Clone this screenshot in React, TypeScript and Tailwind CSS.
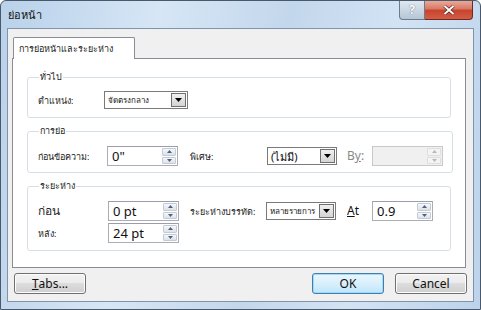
const ui = "font-['Segoe_UI','Noto_Sans','DejaVu_Sans',sans-serif]";

function SpinBox({ value, disabled = false, width = "w-[71px]" }: { value: string; disabled?: boolean; width?: string }) {
  return (
    <div
      className={[
        "flex h-[20px] shrink-0 items-stretch border",
        width,
        disabled ? "border-[#c9c9c9] bg-[#f0f0f0]" : "border-[#abadb3] border-t-[#9a9ea8] bg-white",
      ].join(" ")}
    >
      <div className="flex flex-1 items-center pl-[4px] text-[13px] leading-none text-[#111]">{value}</div>
      <div className="flex w-[15px] flex-col gap-px py-px pr-px">
        <SpinButton up disabled={disabled} />
        <SpinButton disabled={disabled} />
      </div>
    </div>
  );
}

function SpinButton({ up = false, disabled = false }: { up?: boolean; disabled?: boolean }) {
  return (
    <div
      className={[
        "flex flex-1 items-center justify-center rounded-[1px] border",
        disabled ? "border-[#dedede] bg-[#f4f4f4]" : "border-[#c3cbd5] bg-gradient-to-b from-[#f6f7f9] to-[#dde2e8]",
      ].join(" ")}
    >
      <svg width="5" height="3" viewBox="0 0 5 3">
        <path d={up ? "M0 3 L2.5 0 L5 3 Z" : "M0 0 L2.5 3 L5 0 Z"} fill={disabled ? "#b8b8b8" : "#4d6185"} />
      </svg>
    </div>
  );
}

function Combo({ value, width, small = true }: { value: string; width: string; small?: boolean }) {
  return (
    <div className={["flex h-[18px] shrink-0 items-stretch border border-[#7a7a7a] bg-white", width].join(" ")}>
      <div
        className={[
          "flex flex-1 items-center overflow-hidden whitespace-nowrap pl-[3px] leading-none text-[#111]",
          small ? "text-[8px]" : "text-[11px]",
        ].join(" ")}
      >
        {value}
      </div>
      <div className="m-px flex w-[15px] items-center justify-center border border-[#707070] bg-gradient-to-b from-[#f0f0f0] to-[#d4d4d4]">
        <svg width="7" height="4" viewBox="0 0 7 4">
          <path d="M0 0 L7 0 L3.5 4 Z" fill="#000" />
        </svg>
      </div>
    </div>
  );
}

function Group({ label, className, children }: { label: string; className: string; children: React.ReactNode }) {
  return (
    <fieldset className={["mx-[14px] rounded-[3px] border border-[#d5dfe5] px-[9px]", className].join(" ")}>
      <legend className="ml-[2px] px-[1px] text-[9px] leading-[12px] text-[#222]">{label}</legend>
      {children}
    </fieldset>
  );
}

function Label({ children, width, className = "" }: { children: React.ReactNode; width: string; className?: string }) {
  return (
    <div className={["shrink-0 whitespace-nowrap text-[9px] leading-none text-[#222]", width, className].join(" ")}>
      {children}
    </div>
  );
}

function Button({ children, focused = false, className = "" }: { children: React.ReactNode; focused?: boolean; className?: string }) {
  return (
    <button
      type="button"
      className={[
        "flex h-[21px] w-[72px] items-center justify-center rounded-[3px] border text-[12px] leading-none text-[#111]",
        focused
          ? "border-[#3c7fb1] bg-gradient-to-b from-[#eaf6fd] via-[#d9f0fc] to-[#bee6fd] shadow-[inset_0_0_0_1px_#a6d8f4]"
          : "border-[#707070] bg-[linear-gradient(#f2f2f2_0%,#ebebeb_49%,#dddddd_50%,#cfcfcf_100%)] shadow-[inset_0_0_0_1px_#fcfcfc]",
        className,
      ].join(" ")}
    >
      {children}
    </button>
  );
}

export default function App() {
  return (
    <div className={["relative h-[310px] w-[481px] overflow-hidden bg-white", ui].join(" ")}>
      <div className="flex h-[310px] w-[481px] flex-col rounded-t-[6px] border border-[#49596b] bg-[linear-gradient(100deg,#b9d1ea_0%,#d6e6f5_30%,#c3d7ec_55%,#d2e3f4_75%,#bcd3eb_100%)]">
        {/* title bar */}
        <div className="flex h-[27px] items-start justify-between pl-[7px] pr-[7px]">
          <div className="pt-[7px] text-[11px] leading-[14px] text-[#111]">ย่อหน้า</div>
          <div className="flex">
            <div className="flex h-[19px] w-[26px] items-center justify-center rounded-bl-[4px] border border-t-0 border-[#6b7b8d] bg-gradient-to-b from-[#dfe8f1] to-[#b6c6d6] text-[12px] font-bold leading-none text-white [text-shadow:0_0_1px_#34465a]">
              ?
            </div>
            <div className="flex h-[19px] w-[48px] items-center justify-center rounded-br-[4px] border border-l-0 border-t-0 border-[#6e2a22] bg-[linear-gradient(#e9a99a_0%,#d97763_45%,#c7432d_50%,#d45c42_100%)]">
              <svg width="12" height="10" viewBox="0 0 12 10">
                <path d="M1.5 1 L10.5 9 M10.5 1 L1.5 9" stroke="#4a1a14" strokeWidth="3.2" />
                <path d="M1.5 1 L10.5 9 M10.5 1 L1.5 9" stroke="#fff" strokeWidth="2" />
              </svg>
            </div>
          </div>
        </div>

        {/* client area */}
        <div className="mx-[6px] flex h-[274px] flex-col border border-[#8193a8] bg-[#f0f0f0]">
          <div className="flex flex-col px-[4px] pt-[8px]">
            <div className="relative z-10 ml-px flex h-[22px] w-[122px] items-center rounded-t-[2px] border border-b-0 border-[#898c95] bg-white pl-[5px] text-[9px] leading-none text-[#222]">
              การย่อหน้าและระยะห่าง
            </div>
            <div className="-mt-px flex h-[210px] w-[454px] flex-col border border-[#898c95] bg-white pt-[12px]">
              <Group label="ทั่วไป" className="h-[47px]">
                <div className="flex items-center pt-[8px]">
                  <Label width="w-[67px]" className="pl-px">ตำแหน่ง:</Label>
                  <Combo value="จัดตรงกลาง" width="w-[84px]" />
                </div>
              </Group>

              <Group label="การย่อ" className="mt-[7px] h-[48px]">
                <div className="flex items-center pt-[9px]">
                  <Label width="w-[70px]" className="pl-px">ก่อนข้อความ:</Label>
                  <SpinBox value={'0"'} />
                  <Label width="w-[89px]" className="pl-[12px]">พิเศษ:</Label>
                  <Combo value="(ไม่มี)" width="w-[70px]" small={false} />
                  <div className="w-[25px] shrink-0 pl-[10px] text-[12px] leading-none text-[#888]">
                    B<span className="underline">y</span>:
                  </div>
                  <div className="ml-[10px]">
                    <SpinBox value="" disabled />
                  </div>
                </div>
              </Group>

              <Group label="ระยะห่าง" className="mt-[7px] h-[71px]">
                <div className="flex flex-col gap-[2px] pt-[9px]">
                  <div className="flex items-center">
                    <Label width="w-[71px]" className="pl-px text-[12px]">ก่อน</Label>
                    <SpinBox value="0 pt" />
                    <Label width="w-[87px]" className="pl-[11px] text-[8px]">ระยะห่างบรรทัด:</Label>
                    <Combo value="หลายรายการ" width="w-[70px]" />
                    <div className="w-[24px] shrink-0 pl-[11px] text-[12px] leading-none text-[#111]">
                      <span className="underline">A</span>t
                    </div>
                    <div className="ml-[12px]">
                      <SpinBox value="0.9" width="w-[61px]" />
                    </div>
                  </div>
                  <div className="flex items-center">
                    <Label width="w-[71px]" className="pl-px">หลัง:</Label>
                    <SpinBox value="24 pt" />
                  </div>
                </div>
              </Group>
            </div>
          </div>

          <div className="mt-[5px] flex items-center px-[6px]">
            <Button>
              <span className="underline">T</span>abs...
            </Button>
            <div className="flex-1" />
            <Button focused>OK</Button>
            <Button className="ml-[11px]">Cancel</Button>
          </div>
        </div>
      </div>
    </div>
  );
}
